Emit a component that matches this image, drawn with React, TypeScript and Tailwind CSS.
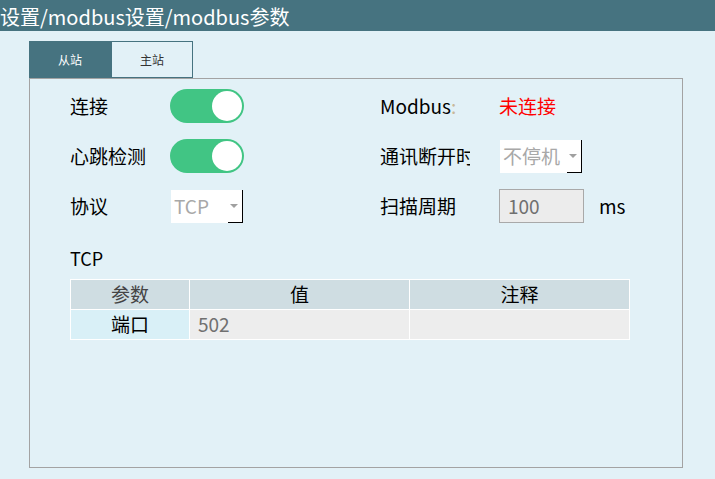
import React from "react";

const font = { fontFamily: '"Microsoft YaHei", "Noto Sans CJK SC", "Noto Sans", sans-serif' };

function Toggle() {
  return (
    <div className="flex h-[34px] w-[74px] items-center justify-end rounded-full bg-[#41c584] px-[2px]">
      <div className="size-[30px] rounded-full bg-white" />
    </div>
  );
}

function Combo({ value, width }: { value: string; width: string }) {
  return (
    <div className={`relative flex h-[33px] items-center bg-white pl-[3px] text-[19px] text-[#a8a8a8] ${width}`}>
      <span>{value}</span>
      <span className="absolute right-[5px] top-[14px] h-0 w-0 border-x-[4px] border-t-[4px] border-x-transparent border-t-[#a0a0a0]" />
      <span className="absolute bottom-0 right-0 h-[33px] w-[15px] border-b border-r border-black" />
    </div>
  );
}

export default function App() {
  return (
    <div style={font} className="h-[479px] w-[715px] overflow-hidden bg-[#e2f1f7]">
      <div className="flex h-[31px] items-end bg-[#467380] pb-[1px] text-[20px] leading-[26px] text-white">
        设置/modbus设置/modbus参数
      </div>
      <div className="flex pl-[29px] pt-[10px]">
        <div className="flex h-[37px] w-[82px] items-center justify-center bg-[#467380] text-[12px] text-white">从站</div>
        <div className="flex h-[37px] w-[82px] items-center justify-center border border-[#467380] text-[12px] text-[#333]">主站</div>
      </div>
      <div className="ml-[29px] flex h-[390px] w-[654px] flex-col border border-[#a3a3a3] pl-[40px] pt-[10px] text-[19px] text-black">
        <div className="flex">
          <div className="flex w-[310px] flex-col gap-[16px]">
            <div className="flex h-[34px] items-center">
              <span className="w-[100px]">连接</span>
              <Toggle />
            </div>
            <div className="flex h-[34px] items-center">
              <span className="w-[100px]">心跳检测</span>
              <Toggle />
            </div>
            <div className="flex h-[34px] items-center">
              <span className="w-[101px]">协议</span>
              <Combo value="TCP" width="w-[72px]" />
            </div>
          </div>
          <div className="flex flex-col gap-[16px]">
            <div className="flex h-[34px] items-center">
              <span className="w-[119px]">Modbus<span className="text-[#c8b89a]">:</span></span>
              <span className="text-[#ff0000]">未连接</span>
            </div>
            <div className="flex h-[34px] items-center">
              <span className="w-[90px] overflow-hidden whitespace-nowrap">通讯断开时</span>
              <span className="w-[30px]" />
              <Combo value="不停机" width="w-[82px]" />
            </div>
            <div className="flex h-[34px] items-center">
              <span className="w-[119px]">扫描周期</span>
              <div className="flex h-[34px] w-[85px] items-center border border-[#a9a9a9] bg-[#ececec] pl-[8px] text-[#707070]">100</div>
              <span className="ml-[15px]">ms</span>
            </div>
          </div>
        </div>
        <div className="mt-[23px] text-[18px] leading-[24px]">TCP</div>
        <div className="mt-[9px] grid w-[560px] grid-cols-[118px_219px_219px] gap-[1px] border border-white bg-white text-[19px]">
          <div className="flex h-[29px] items-center justify-center bg-[#cfdde2] text-[#444]">参数</div>
          <div className="flex h-[29px] items-center justify-center bg-[#cfdde2]">值</div>
          <div className="flex h-[29px] items-center justify-center bg-[#cfdde2]">注释</div>
          <div className="flex h-[29px] items-center justify-center bg-[#d9f0f7]">端口</div>
          <div className="flex h-[29px] items-center bg-[#ededed] pl-[8px] text-[#707070]">502</div>
          <div className="h-[29px] bg-[#ededed]" />
        </div>
      </div>
    </div>
  );
}
